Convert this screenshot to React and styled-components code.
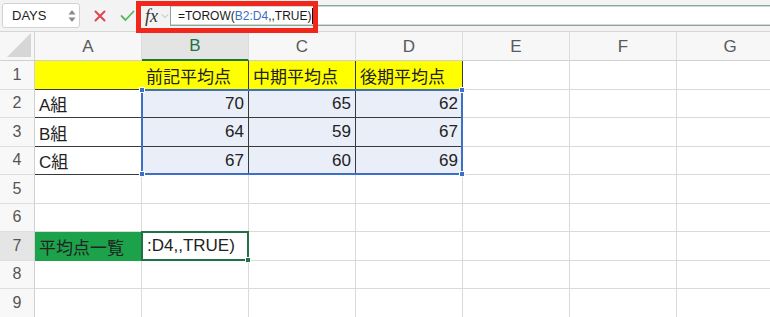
import React from 'react';
import styled, { createGlobalStyle } from 'styled-components';

const GlobalStyle = createGlobalStyle`
    html, body {
        margin: 0;
        padding: 0;
        background: #ffffff;
        overflow: hidden;
    }
    body {
        font-family: "Liberation Sans", "Noto Sans CJK JP", sans-serif;
        color: #222;
    }
    * {
        box-sizing: border-box;
    }
`;

const COLS = ['A', 'B', 'C', 'D', 'E', 'F', 'G'];
const ROWS = [1, 2, 3, 4, 5, 6, 7, 8, 9];

const data = {
    1: ['', '前記平均点', '中期平均点', '後期平均点'],
    2: ['A組', 70, 65, 62],
    3: ['B組', 64, 59, 67],
    4: ['C組', 67, 60, 69],
    7: ['平均点一覧'],
};

const YELLOW = '#ffff00';
const GREEN = '#1ba24b';
const TINT = '#e9eef8';
const DARK = '#3a3a3a';
const GRID = '#dadada';

function cellLook(r, c) {
    let fill = '#ffffff';
    let right = GRID;
    let bottom = GRID;
    if (r === 1 && c <= 3) fill = YELLOW;
    if (r >= 2 && r <= 4 && c >= 1 && c <= 3) fill = TINT;
    if (r === 7 && c === 0) {
        fill = GREEN;
        right = GREEN;
        bottom = GREEN;
    }
    if (r <= 4 && c <= 3) bottom = DARK;
    if (r <= 4 && c <= 3) right = DARK;
    if (r === 1 && c === 0) right = YELLOW;
    return { fill, right, bottom };
}

function App() {
    return (
        <>
            <GlobalStyle />
            <Page>
                <Toolbar>
                    <NameBox>
                        <span>DAYS</span>
                        <svg width="8" height="14" viewBox="0 0 8 14">
                            <path d="M4 1 L7.5 5.5 L0.5 5.5 Z" fill="#8a8a8a" />
                            <path d="M4 13 L7.5 8.5 L0.5 8.5 Z" fill="#8a8a8a" />
                        </svg>
                    </NameBox>
                    <IconButton $gap={12}>
                        <svg width="12" height="12" viewBox="0 0 12 12">
                            <path d="M1.5 1.5 L10.5 10.5 M10.5 1.5 L1.5 10.5" stroke="#e0454f" strokeWidth="2" strokeLinecap="round" />
                        </svg>
                    </IconButton>
                    <IconButton $gap={11}>
                        <svg width="15" height="12" viewBox="0 0 15 12">
                            <path d="M1.5 6 L5.5 10 L13.5 1.5" stroke="#5db560" strokeWidth="1.8" fill="none" strokeLinecap="round" strokeLinejoin="round" />
                        </svg>
                    </IconButton>
                    <FxArea>
                        <Fx>fx</Fx>
                        <svg width="8" height="6" viewBox="0 0 8 6">
                            <path d="M1 1.5 L4 4.5 L7 1.5" stroke="#b5b5b5" strokeWidth="1" fill="none" />
                        </svg>
                    </FxArea>
                    <FormulaInput>
                        =TOROW(<Ref>B2:D4</Ref>,,TRUE)<Caret />
                    </FormulaInput>
                    <Highlight />
                </Toolbar>

                <Sheet>
                    <Corner $row={1} $col={1} />
                    {COLS.map((col, i) => (
                        <ColHeader key={col} $row={1} $col={i + 2} $active={col === 'B'}>
                            {col}
                        </ColHeader>
                    ))}
                    {ROWS.map((r) => (
                        <React.Fragment key={r}>
                            <RowHeader $row={r + 1} $col={1} $active={r === 7}>
                                {r}
                            </RowHeader>
                            {COLS.map((col, c) => {
                                const look = cellLook(r, c);
                                const value = data[r] ? data[r][c] : undefined;
                                return (
                                    <Cell
                                        key={col}
                                        $row={r + 1}
                                        $col={c + 2}
                                        $fill={look.fill}
                                        $right={look.right}
                                        $bottom={look.bottom}
                                        $align={typeof value === 'number' ? 'flex-end' : 'flex-start'}
                                    >
                                        {value}
                                    </Cell>
                                );
                            })}
                        </React.Fragment>
                    ))}
                    <Selection $rows="3 / 6" $cols="3 / 6">
                        <Handle $x="left" $y="top" />
                        <Handle $x="right" $y="top" />
                        <Handle $x="left" $y="bottom" />
                        <Handle $x="right" $y="bottom" />
                    </Selection>
                    <ActiveCell $row={8} $col={3}>
                        <EditText>:D4,,TRUE)</EditText>
                        <FillHandle />
                    </ActiveCell>
                </Sheet>
            </Page>
        </>
    );
}

const Page = styled.div`
    width: 770px;
    height: 317px;
    overflow: hidden;
    background: #ffffff;
`;

const Toolbar = styled.div`
    position: relative;
    display: flex;
    align-items: center;
    height: 32px;
    background: #f3f3f3;
    border-bottom: 1px solid #d6d6d6;
`;

const NameBox = styled.div`
    display: flex;
    align-items: center;
    justify-content: space-between;
    width: 78px;
    height: 25px;
    margin-left: 2px;
    padding: 0 3px 0 9px;
    background: #ffffff;
    border: 1px solid #d2d2d2;
    border-radius: 3px;
    font-size: 13px;
    color: #222;
`;

const IconButton = styled.div`
    display: flex;
    align-items: center;
    justify-content: center;
    width: 16px;
    height: 20px;
    margin-left: ${(p) => p.$gap || 10}px;
`;

const FxArea = styled.div`
    display: flex;
    align-items: center;
    gap: 3px;
    width: 35px;
    height: 22px;
    padding-left: 10px;
`;

const Fx = styled.span`
    font-family: "Liberation Serif", "DejaVu Serif", serif;
    font-style: italic;
    font-size: 18px;
    color: #333;
    line-height: 1;
`;

const FormulaInput = styled.div`
    display: flex;
    align-items: center;
    flex: 1;
    height: 21px;
    padding-left: 7px;
    background: #ffffff;
    border: 1px solid #8aa897;
    box-shadow: inset 0 1px 0 #cddbd2, inset 0 -1px 0 #cddbd2;
    border-right: none;
    font-size: 12px;
    color: #1a1a1a;
    white-space: nowrap;
`;

const Ref = styled.span`
    color: #3b6fc1;
`;

const Caret = styled.span`
    display: inline-block;
    width: 1px;
    height: 16px;
    margin-left: 1px;
    background: #111;
`;

const Highlight = styled.div`
    position: absolute;
    left: 136px;
    top: 1px;
    width: 182px;
    height: 32px;
    border: 5px solid #f2271c;
    z-index: 3;
    pointer-events: none;
`;

const Sheet = styled.div`
    position: relative;
    display: grid;
    grid-template-columns: 35px repeat(7, 107px);
    grid-template-rows: 29px repeat(9, 28.5px);
`;

const placed = (p) => `
    grid-row: ${p.$row};
    grid-column: ${p.$col};
`;

const Corner = styled.div`
    ${placed}
    position: relative;
    background: #f7f7f7;
    border-right: 1px solid #d4d4d4;
    border-bottom: 1px solid #d0d0d0;

    &::after {
        content: '';
        position: absolute;
        right: 3px;
        bottom: 3px;
        width: 24px;
        height: 24px;
        background: #d6d6d6;
        clip-path: polygon(100% 0, 100% 100%, 0 100%);
    }
`;

const ColHeader = styled.div`
    ${placed}
    display: flex;
    align-items: center;
    justify-content: center;
    background: ${(p) => (p.$active ? '#e4e4e4' : '#f7f7f7')};
    border-right: 1px solid #dcdcdc;
    border-bottom: ${(p) => (p.$active ? '2px solid #217346' : '1px solid #d0d0d0')};
    color: ${(p) => (p.$active ? '#217346' : '#5a5a5a')};
    font-size: 17px;
    padding-top: 1px;
`;

const RowHeader = styled.div`
    ${placed}
    display: flex;
    align-items: center;
    justify-content: center;
    background: ${(p) => (p.$active ? '#e5e5e5' : '#f8f8f8')};
    border-right: 1px solid #d0d0d0;
    border-bottom: 1px solid #dedede;
    color: #555;
    font-size: 16px;
`;

const Cell = styled.div`
    ${placed}
    display: flex;
    align-items: center;
    justify-content: ${(p) => p.$align};
    padding: 1px 4px 0 4px;
    background: ${(p) => p.$fill};
    border-right: 1px solid ${(p) => p.$right};
    border-bottom: 1px solid ${(p) => p.$bottom};
    font-size: 17px;
    color: #222;
    white-space: nowrap;
`;

const Selection = styled.div`
    grid-row: ${(p) => p.$rows};
    grid-column: ${(p) => p.$cols};
    position: relative;
    margin: -1px 0 0 -1px;
    border: 2px solid #3d6fc5;
    pointer-events: none;
    z-index: 2;
`;

const Handle = styled.span`
    position: absolute;
    width: 6px;
    height: 6px;
    background: #3d6fc5;
    border: 1px solid #ffffff;
    ${(p) => (p.$x === 'left' ? 'left: -4px;' : 'right: -4px;')}
    ${(p) => (p.$y === 'top' ? 'top: -4px;' : 'bottom: -4px;')}
`;

const ActiveCell = styled.div`
    ${placed}
    position: relative;
    display: flex;
    align-items: center;
    margin: -1px 0 0 -1px;
    padding: 1px 0 0 4px;
    background: #ffffff;
    border: 2px solid #207245;
    z-index: 2;
`;

const EditText = styled.span`
    font-size: 17px;
    color: #222;
    white-space: nowrap;
`;

const FillHandle = styled.span`
    position: absolute;
    right: -4px;
    bottom: -4px;
    width: 6px;
    height: 6px;
    background: #207245;
    border: 1px solid #ffffff;
`;

export default App;
